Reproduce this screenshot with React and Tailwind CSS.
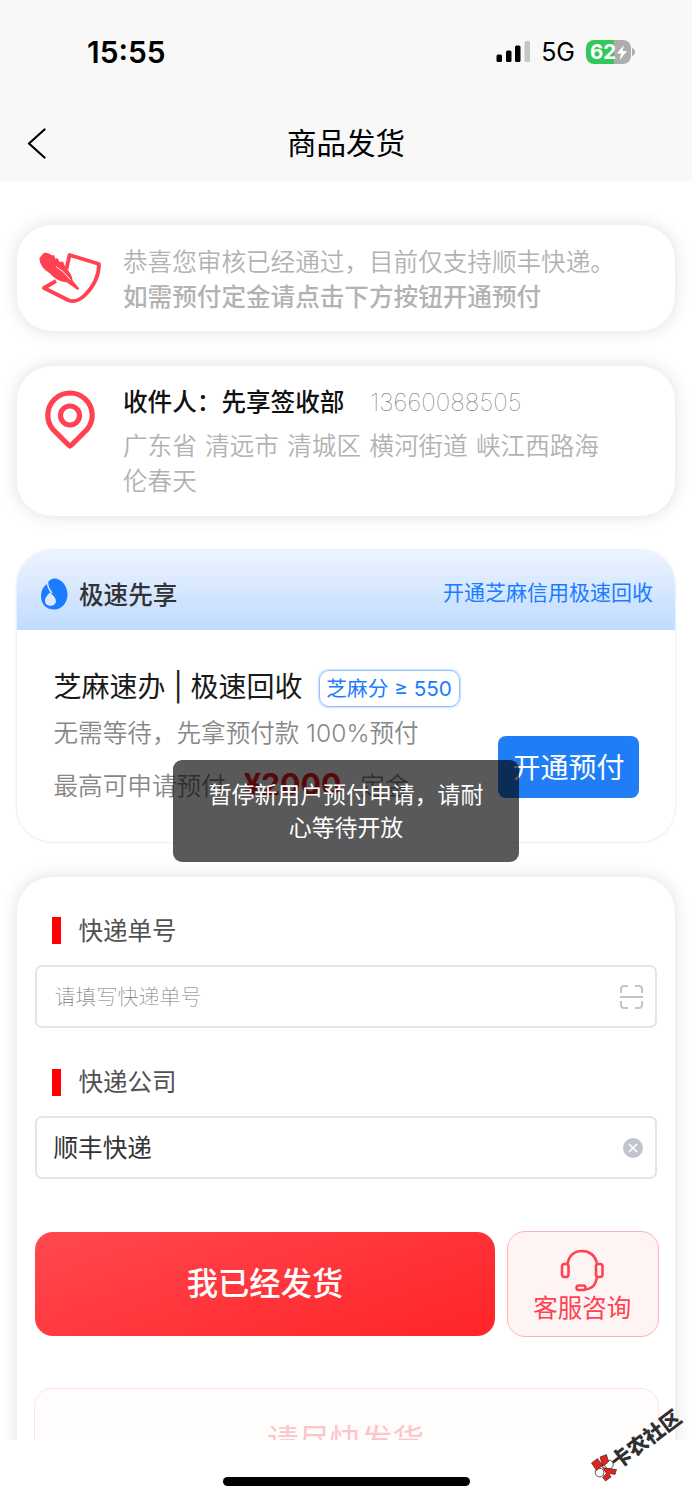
const CARD = "mx-[17px] w-[657.5px] rounded-[35px] bg-white shadow-[0_0_18px_rgba(0,0,0,0.13)]";

function StatusBar() {
  return (
    <div className="flex h-[104px] items-center justify-between pl-[87px] pr-[57px]">
      <span className="pt-[1px] text-[29.900px] font-semibold leading-none text-black">15:55</span>
      <div className="flex items-center">
        <svg className="mr-[11px] h-[22px] w-[34px]" viewBox="0 0 34 22">
          <rect x="0.500" y="13.500" width="5.500" height="7.500" rx="1.500" fill="#000" />
          <rect x="10" y="9.500" width="5.500" height="11.500" rx="1.500" fill="#000" />
          <rect x="19" y="4.500" width="5.500" height="16.500" rx="1.500" fill="#000" />
          <rect x="28.500" y="0" width="5.500" height="21" rx="1.500" fill="#c6c6c6" />
        </svg>
        <span className="mr-[11px] pt-[1px] text-[25px] leading-none text-black">5G</span>
        <div className="flex h-[24px] w-[45px] items-center rounded-[8px] bg-[linear-gradient(90deg,#34c759_63%,#adadad_63%)] pl-[4px]">
          <span className="text-[20.500px] font-bold leading-none text-white">62</span>
          <svg className="h-[17px] w-[12px]" viewBox="0 0 13 17">
            <path d="M8.500 0.500 1 9.500h4.500L4 16.500 12 7H7.200z" fill="#fff" />
          </svg>
        </div>
        <svg className="ml-[1px] h-[8px] w-[3px]" viewBox="0 0 3 8">
          <path d="M0 0q3 1 3 4t-3 4z" fill="#adadad" />
        </svg>
      </div>
    </div>
  );
}

function NavBar() {
  return (
    <div className="flex h-[77px] items-center px-[27px]">
      <svg className="h-[32px] w-[20px]" viewBox="0 0 20 32" fill="none" stroke="#000" strokeWidth="2.200" strokeLinecap="round" strokeLinejoin="round">
        <path d="M17.500 2.500 2 16.500 17.500 30.500" />
      </svg>
      <h1 className="flex-1 pr-[20px] pt-[2px] text-center text-[29.500px] leading-none text-black">商品发货</h1>
    </div>
  );
}

function QuillIcon() {
  return (
    <svg className="h-[56px] w-[66px]" viewBox="0 0 66 56" fill="none">
      <path d="M29.500 19 32.500 5 62 14Q62 31 48 45 40 53 32 50.500L7 38l12-7" stroke="#ff4151" strokeWidth="3.800" strokeLinejoin="round" />
      <path d="M2.300 8.300 7 2.700q5-.5 8 2.800l2-.5 1.500 4 2-1 2 4 3.500-.500 2 5Q35 24 35.700 30.500L42.300 38.500 40.500 40 30 32.500Q19 31 13 23.500 3 18 2.300 8.300z" fill="#ff4151" />
      <path d="M19 16.500Q27 21 33.500 30" stroke="#fff" strokeWidth="0.900" />
    </svg>
  );
}

function PinIcon() {
  return (
    <svg className="h-[60px] w-[52px]" viewBox="0 0 52 60" fill="none" stroke="#ff4151" strokeWidth="5.200" strokeLinejoin="round">
      <path d="M26 56 24 54.500 9 39.500A22.200 22.200 0 1 1 43 39.500L28 54.500z" />
      <circle cx="26" cy="25.500" r="9.500" />
    </svg>
  );
}

function DropIcon() {
  return (
    <svg className="h-[32px] w-[28px]" viewBox="0 0 28 32">
      <path d="M7.500 5.500Q9.500 1 14 .5c8 0 13.500 8 13.500 16S22 31.500 14.500 31.500 1 27 1 18q0-8 6.500-12.500z" fill="#1a7cff" />
      <path d="M10 14.500q6 5 6 8.500c0 3-2.500 4.800-5.500 4.800S5 26 5 22.800q0-3.800 5-8.300z" fill="#dbe9fe" />
      <path d="M7.500 4.500q0 5.500 4.500 10.500" stroke="#dbe9fe" strokeWidth="1.500" fill="none" />
    </svg>
  );
}

function FieldLabel({ children }) {
  return (
    <div className="flex h-[27px] items-center gap-[17.500px] pl-[35px]">
      <span className="h-[27px] w-[9px] bg-[#ff0000]" />
      <span className="pt-[1px] text-[24.500px] leading-[27px] text-[#515151]">{children}</span>
    </div>
  );
}

function HeadsetIcon() {
  return (
    <svg className="h-[43px] w-[44px] shrink-0" viewBox="0 0 44 43" fill="none" stroke="#ff4151" strokeWidth="2.600">
      <path d="M7.500 15C9 6 15 2 22 2s13.500 4 15 13M37 27q-1 13-12.500 13.500" />
      <rect x="2" y="15" width="6.500" height="13" rx="2.500" />
      <rect x="36" y="15" width="6.500" height="13" rx="2.500" />
      <rect x="16.500" y="36.500" width="9" height="4.500" rx="2.200" />
    </svg>
  );
}

function Watermark() {
  return (
    <>
      <svg className="absolute left-[591px] top-[1454px] h-[28px] w-[28px]" viewBox="0 0 28 28">
        <circle cx="18" cy="10.500" r="4.300" fill="#fff" stroke="#333" strokeWidth=".8" />
        <circle cx="8.500" cy="18.500" r="4.300" fill="#fff" stroke="#333" strokeWidth=".8" />
        <path d="M0.500 9l6-4.500 5 7-6 5zM9 3l6.500-2.500 2 7.500-6 4.500zM11.500 13.500l5.500 1 8.500 1-1.500 5-5-1-.5 1 1.500 2.500-5.500 4-3-4 4-3.500z" fill="#e2231a" stroke="#222" strokeWidth=".6" />
      </svg>
      <span className="absolute left-[605px] top-[1429px] w-[84px] -rotate-[37deg] whitespace-nowrap text-[20.500px] font-black leading-none text-[#303030]">卡农社区</span>
    </>
  );
}

export default function App() {
  return (
    <div className="relative h-[1500px] w-[692px] overflow-hidden bg-white font-['Inter','Noto_Sans_CJK_SC',sans-serif]">
      <header className="h-[181px] bg-[#f8f8f8]">
        <StatusBar />
        <NavBar />
      </header>

      <main className="flex h-[1259px] flex-col overflow-hidden pt-[44px]">
        <section className={`${CARD} flex h-[106px] shrink-0 items-center pl-[20px]`}>
          <QuillIcon />
          <div className="ml-[20px] pt-[3px] text-[24.600px] leading-[35px] text-[#b2b2b2]">
            <p className="font-[350]">恭喜您审核已经通过，目前仅支持顺丰快递。</p>
            <p className="font-medium">如需预付定金请点击下方按钮开通预付</p>
          </div>
        </section>

        <section className={`${CARD} mt-[35px] flex h-[150px] shrink-0 pl-[27px] pt-[19px]`}>
          <div className="pt-[5px]"><PinIcon /></div>
          <div className="ml-[27px] text-[24.600px] leading-[35px]">
            <p className="flex items-center gap-[26px]">
              <span className="font-medium text-[#111]">收件人：先享签收部</span>
              <span className="text-[24.500px] font-thin text-[#666]">13660088505</span>
            </p>
            <p className="mt-[9px] w-[490px] font-[350] text-[#b2b2b2] [word-spacing:1.400px]">广东省 清远市 清城区 横河街道 峡江西路海伦春天</p>
          </div>
        </section>

        <section className="mx-[17px] mt-[34px] h-[292px] w-[658px] shrink-0 overflow-hidden rounded-[35px] bg-white shadow-[0_0_2px_1px_#e3eeff]">
          <div className="flex h-[80px] items-center justify-between bg-gradient-to-b from-[#edf4ff] to-[#c0dbff] pl-[23px] pr-[22px]">
            <div className="flex items-center gap-[11px] pt-[7px]">
              <DropIcon />
              <h2 className="pt-[2px] text-[24.600px] font-medium leading-8 text-[#333]">极速先享</h2>
            </div>
            <a className="pt-[5px] text-[21px] leading-8 text-[#1a7cff]">开通芝麻信用极速回收</a>
          </div>
          <div className="flex justify-between pl-[36.500px] pr-[36px]">
            <div className="pt-[38px]">
              <div className="flex h-[38px] items-center">
                <h3 className="whitespace-nowrap text-[28px] leading-[38px] text-[#1a1a1a]">芝麻速办 | 极速回收</h3>
                <span className="ml-[16px] mt-[3px] flex h-[37px] w-[141px] shrink-0 items-center justify-center whitespace-nowrap rounded-[10px] border border-[#94c0ff] pt-[1px] text-[20.700px] text-[#1a7cff] shadow-[0_0_2px_1px_#c9dfff]">芝麻分 ≥ 550</span>
              </div>
              <p className="mt-[10px] text-[24.600px] font-[350] leading-[35px] text-[#888]">无需等待，先拿预付款 100%预付</p>
              <p className="mt-[18px] flex h-[35px] items-center whitespace-nowrap text-[24.600px] font-[350] leading-[35px] text-[#888]">
                最高可申请预付
                <b className="ml-[18px] mr-[19px] pb-[5px] text-[30.300px] font-bold text-[#f51b1b]">¥2000</b>
                定金
              </p>
            </div>
            <button className="mt-[106px] h-[62px] w-[141px] shrink-0 rounded-[8px] bg-[#1f7ef6] pt-[1px] text-[28px] leading-none text-white">开通预付</button>
          </div>
        </section>

        <section className={`${CARD} mt-[35px] h-[650px] shrink-0 pt-[40px]`}>
          <FieldLabel>快递单号</FieldLabel>
          <div className="ml-[18px] mt-[21px] flex h-[63px] w-[622px] items-center justify-between rounded-[7px] border-2 border-[#e5e5e5] pl-[17.500px] pr-[12px]">
            <span className="text-[21px] font-thin leading-none text-[#757575]">请填写快递单号</span>
            <svg className="h-[24px] w-[23px]" viewBox="0 0 23 24" fill="none" stroke="#c0c4cc" strokeWidth="2">
              <path d="M1 8V4q0-3 3-3h4M15 1h4q3 0 3 3v4M1 16v4q0 3 3 3h4M15 23h4q3 0 3-3v-4M0 12h23" />
            </svg>
          </div>
          <div className="mt-[40.500px]"><FieldLabel>快递公司</FieldLabel></div>
          <div className="ml-[18px] mt-[20.500px] flex h-[63px] w-[622px] items-center justify-between rounded-[7px] border-2 border-[#e5e5e5] pl-[16.500px] pr-[12px]">
            <span className="pt-[2px] text-[24.600px] leading-none text-[#333]">顺丰快递</span>
            <svg className="h-[20px] w-[20px]" viewBox="0 0 20 20">
              <circle cx="10" cy="10" r="10" fill="#c0c4cc" />
              <path d="m6 6 8 8M14 6l-8 8" stroke="#fff" strokeWidth="1.600" />
            </svg>
          </div>
          <div className="ml-[18px] mt-[52px] flex items-center gap-[12px]">
            <button className="h-[104px] w-[460px] rounded-[18px] bg-[linear-gradient(160deg,#ff4850,#ff2427)] pt-[2px] text-[31.300px] font-medium leading-none text-white">我已经发货</button>
            <button className="flex h-[106px] w-[151.500px] flex-col items-center rounded-[18px] border border-[#ffb0b4] bg-[#fff4f4] pr-[1px] pt-[17px] text-[24.500px] leading-[32px] text-[#ff4151]">
              <HeadsetIcon />
              客服咨询
            </button>
          </div>
          <div className="ml-[16.500px] mt-[51px] h-[106px] w-[625px] rounded-[18px] border border-[#ffe2e4] bg-[#fffdfc] pr-[1px] text-center text-[31.300px] leading-[105px] text-[#fcc5c9]">请尽快发货</div>
        </section>
      </main>

      <footer className="flex h-[60px] justify-center bg-white pt-[37px]">
        <div className="h-[9px] w-[247px] rounded-full bg-black" />
      </footer>

      <div className="absolute left-[173px] top-[760px] flex h-[102px] w-[346px] items-center rounded-[9px] bg-black/65 px-[35px] pt-[2px] text-center text-[22.900px] leading-[33.500px] text-white">
        <p>暂停新用户预付申请，请耐心等待开放</p>
      </div>
      <Watermark />
    </div>
  );
}
